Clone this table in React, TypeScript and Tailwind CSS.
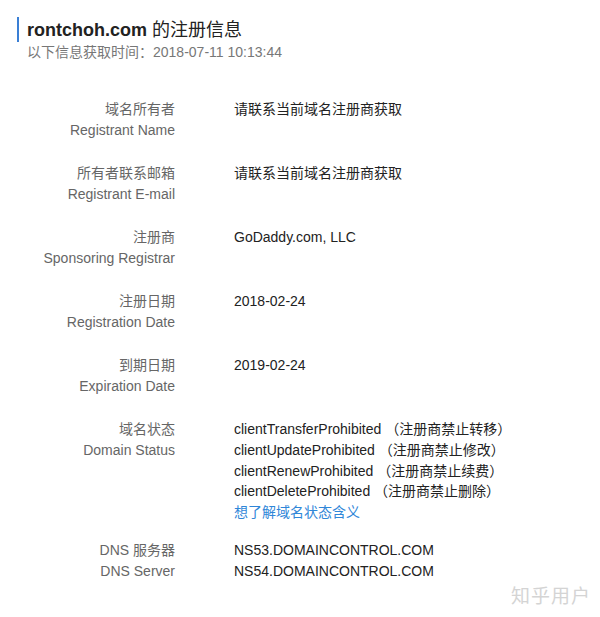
import * as React from 'react'

const font = { fontFamily: '"Liberation Sans", Arial, "Noto Sans CJK SC", sans-serif' }

interface Row {
  zh: string
  en: string
  values: string[]
}

const rows: Row[] = [
  { zh: '域名所有者', en: 'Registrant Name', values: ['请联系当前域名注册商获取'] },
  { zh: '所有者联系邮箱', en: 'Registrant E-mail', values: ['请联系当前域名注册商获取'] },
  { zh: '注册商', en: 'Sponsoring Registrar', values: ['GoDaddy.com, LLC'] },
  { zh: '注册日期', en: 'Registration Date', values: ['2018-02-24'] },
  { zh: '到期日期', en: 'Expiration Date', values: ['2019-02-24'] },
]

const statuses = [
  'clientTransferProhibited （注册商禁止转移）',
  'clientUpdateProhibited （注册商禁止修改）',
  'clientRenewProhibited （注册商禁止续费）',
  'clientDeleteProhibited （注册商禁止删除）',
]

function InfoRow({ zh, en, children, className }: { zh: string; en: string; children: React.ReactNode; className?: string }) {
  return (
    <div className={`flex text-[14px] leading-[21px] ${className ?? ''}`}>
      <div className="w-[175px] shrink-0 text-right text-[#666]">
        <div>{zh}</div>
        <div>{en}</div>
      </div>
      <div className="ml-[59px] text-[#222]">{children}</div>
    </div>
  )
}

export default function App() {
  return (
    <div className="relative min-h-[617px] w-[600px] bg-white" style={font}>
      <div className="px-[17px] pt-[17px]">
        <div className="border-l-2 border-[#3a7fd5] pl-[8px] pt-[2px] text-[18px] leading-[23px] text-[#222]">
          <span className="font-bold">rontchoh.com</span> 的注册信息
        </div>
        <div className="mt-[2px] pl-[10px] text-[14px] leading-[16px] text-[#777]">
          以下信息获取时间：2018-07-11 10:13:44
        </div>
      </div>

      <div className="mt-[39px]">
        {rows.map((r) => (
          <InfoRow key={r.en} zh={r.zh} en={r.en} className="mb-[22px]">
            {r.values.map((v) => (
              <div key={v}>{v}</div>
            ))}
          </InfoRow>
        ))}

        <InfoRow zh="域名状态" en="Domain Status" className="mb-[17px]">
          <div className="leading-[20.75px]">
            {statuses.map((s) => (
              <div key={s}>{s}</div>
            ))}
            <div className="text-[#2f86d8]">想了解域名状态含义</div>
          </div>
        </InfoRow>

        <InfoRow zh="DNS 服务器" en="DNS Server">
          <div>NS53.DOMAINCONTROL.COM</div>
          <div>NS54.DOMAINCONTROL.COM</div>
        </InfoRow>
      </div>

      <div className="absolute right-[9px] bottom-[6px] text-[19px] tracking-[1px] text-[#d4d4d4]">
        知乎用户
      </div>
    </div>
  )
}
